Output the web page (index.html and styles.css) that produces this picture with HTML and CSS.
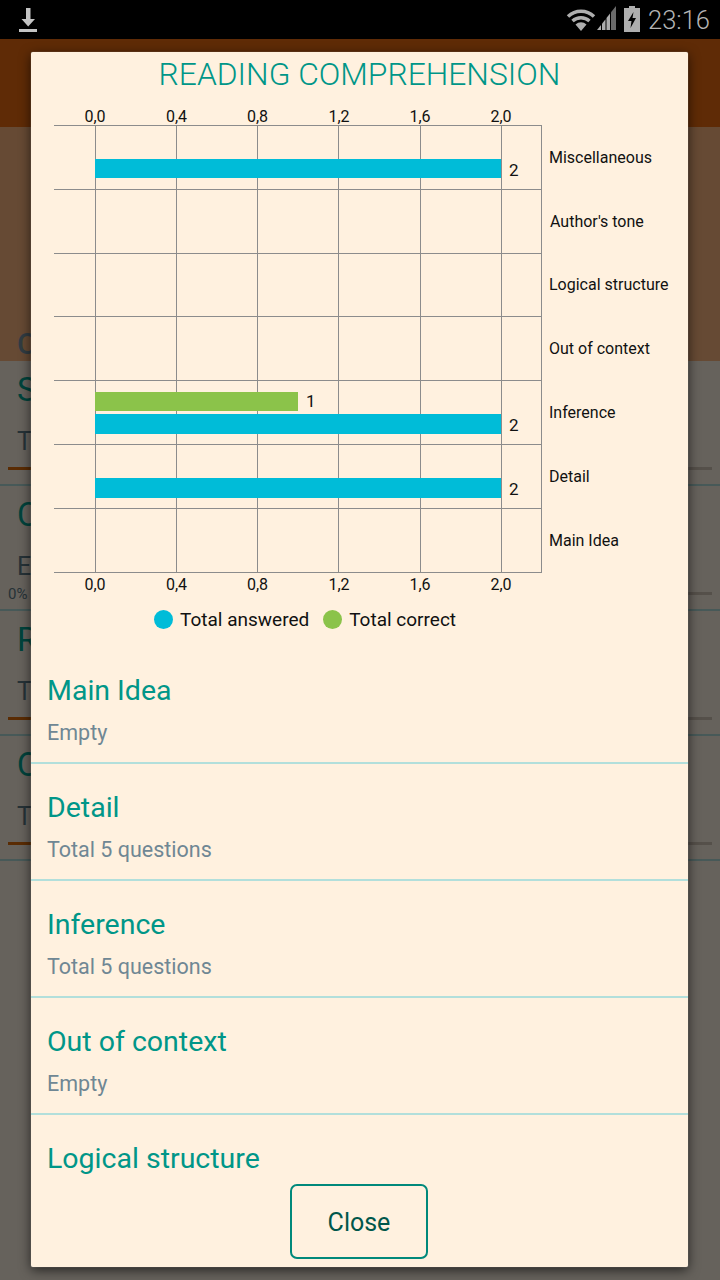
FILE: index.html
```html
<!DOCTYPE html>
<html lang="en">
<head>
  <meta charset="UTF-8" />
  <meta name="viewport" content="width=device-width, initial-scale=1" />
  <title>Reading Comprehension</title>
  <link rel="stylesheet" href="styles.css">
</head>
<body>
  <div class="status-bar">
    <svg class="status-download" width="18" height="25" viewBox="0 0 18 25" aria-hidden="true">
      <path d="M7 0h4.500v11H16l-6.800 7.500L2.500 11H7z" />
      <rect x="0" y="21" width="18" height="3" />
    </svg>
    <div class="status-right">
      <svg class="status-icon" width="30" height="24" viewBox="0 0 30 24" aria-hidden="true">
        <path class="wifi-arc" d="M2 8.500a19 19 0 0 1 26 0" />
        <path class="wifi-arc" d="M6.500 13a13 13 0 0 1 17 0" />
        <path d="M9.500 16.500a8 8 0 0 1 11 0L15 23z" />
      </svg>
      <svg class="status-icon signal" width="20" height="25" viewBox="0 0 20 25" aria-hidden="true">
        <path d="M0 25l4-5v5z" />
        <path d="M5 25v-6.200l3.500-4.500V25z" />
        <path d="M9.500 25V13l3.500-4.500V25z" />
        <path class="dim" d="M14 25V7.300L19 1v24z" />
      </svg>
      <svg class="status-icon battery" width="16" height="26" viewBox="0 0 16 26" aria-hidden="true">
        <path d="M5 0h6v2h5v24H0V2h5zM9.500 6L4 15h3.500l-1 7L12 12H8.500z" fill-rule="evenodd" />
      </svg>
      <span class="status-time">23:16</span>
    </div>
  </div>

  <div class="app">
    <div class="app-bar"></div>
    <div class="banner">
      <span class="banner-title">Categories</span>
    </div>
    <div class="category">
      <div class="category-title">Sentence completion</div>
      <div class="category-sub">Total 10 questions</div>
      <div class="progress"><div class="progress-fill"></div></div>
    </div>
    <div class="category">
      <div class="category-title">Critical reasoning</div>
      <div class="category-sub">Empty</div>
      <div class="progress progress-empty"><span class="progress-label">0%</span><div class="progress-track"></div></div>
    </div>
    <div class="category">
      <div class="category-title">Reading comprehension</div>
      <div class="category-sub">Total 25 questions</div>
      <div class="progress"><div class="progress-fill"></div></div>
    </div>
    <div class="category">
      <div class="category-title">Quantitative</div>
      <div class="category-sub">Total 12 questions</div>
      <div class="progress"><div class="progress-fill"></div></div>
    </div>

    <div class="overlay"></div>

    <div class="modal">
      <h1 class="modal-title">READING COMPREHENSION</h1>

      <!-- viewBox uses screen coordinates so the numbers read like the grid -->
      <svg class="chart" width="657" height="496" viewBox="31 104 657 496">
        <g class="grid">
          <path d="M54 125.500H541.500M54 189.500H541.500M54 253.500H541.500M54 316.500H541.500M54 380.500H541.500M54 444.500H541.500M54 508.500H541.500M54 572.500H541.500" />
          <path d="M95.500 125V573M176.500 125V573M257.500 125V573M338.500 125V573M420.500 125V573M501.500 125V573M541.500 125V573" />
        </g>
        <rect class="bar-answered" x="95" y="159" width="406" height="19" />
        <rect class="bar-correct" x="95" y="392" width="203" height="19" />
        <rect class="bar-answered" x="95" y="414" width="406" height="20" />
        <rect class="bar-answered" x="95" y="478" width="406" height="20" />

        <g class="axis">
          <text x="95" y="122">0,0</text>
          <text x="176.500" y="122">0,4</text>
          <text x="257.500" y="122">0,8</text>
          <text x="339" y="122">1,2</text>
          <text x="420" y="122">1,6</text>
          <text x="501" y="122">2,0</text>
        </g>
        <g class="axis">
          <text x="95" y="590">0,0</text>
          <text x="176.500" y="590">0,4</text>
          <text x="257.500" y="590">0,8</text>
          <text x="339" y="590">1,2</text>
          <text x="420" y="590">1,6</text>
          <text x="501" y="590">2,0</text>
        </g>
        <g class="value">
          <text x="509" y="176">2</text>
          <text x="306" y="407">1</text>
          <text x="509" y="431">2</text>
          <text x="509" y="495">2</text>
        </g>
        <g class="label">
          <text x="549" y="163">Miscellaneous</text>
          <text x="550" y="227">Author's tone</text>
          <text x="549" y="290">Logical structure</text>
          <text x="549" y="354">Out of context</text>
          <text x="549" y="418">Inference</text>
          <text x="549" y="482">Detail</text>
          <text x="549" y="546">Main Idea</text>
        </g>
      </svg>

      <div class="legend">
        <span class="legend-item"><i class="dot dot-answered"></i>Total answered</span>
        <span class="legend-item"><i class="dot dot-correct"></i>Total correct</span>
      </div>

      <div class="topic-list">
        <div class="topic">
          <div class="topic-name">Main Idea</div>
          <div class="topic-count">Empty</div>
        </div>
        <div class="topic">
          <div class="topic-name">Detail</div>
          <div class="topic-count">Total 5 questions</div>
        </div>
        <div class="topic">
          <div class="topic-name">Inference</div>
          <div class="topic-count">Total 5 questions</div>
        </div>
        <div class="topic">
          <div class="topic-name">Out of context</div>
          <div class="topic-count">Empty</div>
        </div>
        <div class="topic">
          <div class="topic-name">Logical structure</div>
        </div>
      </div>

      <div class="modal-footer">
        <button class="close-btn" type="button">Close</button>
      </div>
    </div>
  </div>
</body>
</html>
```

FILE: styles.css
```css
body {
  margin: 0;
  background: #000;
  font-family: Roboto, "Noto Sans", sans-serif;
}

/* status bar */
.status-bar {
  height: 39px;
  background: #000;
  display: flex;
  align-items: center;
  justify-content: space-between;
  padding: 0 10px 0 19px;
}
.status-download {
  fill: #c4c4c4;
  margin-top: 1px;
}
.status-right {
  display: flex;
  align-items: center;
}
.status-icon {
  fill: #aeaeae;
  display: block;
}
.wifi-arc {
  fill: none;
  stroke: #aeaeae;
  stroke-width: 3.5;
}
.signal {
  margin-left: 1px;
  margin-bottom: 4px;
}
.signal .dim {
  fill: #6a6a6a;
}
.battery {
  margin-left: 7px;
  margin-bottom: 1px;
}
.status-time {
  margin-left: 8px;
  font-size: 25.500px;
  font-weight: 300;
  color: #b4b4b4;
}

/* page behind the dialog */
.app {
  position: relative;
  height: 1241px;
  overflow: hidden;
  background: #fff5e5;
}
.app-bar {
  height: 88px;
  background: #ee6c0f;
}
.banner {
  height: 234px;
  background: #ffb982;
  display: flex;
  align-items: flex-end;
  box-sizing: border-box;
  padding: 0 17px 0;
}
.banner-title {
  font-size: 30px;
  font-weight: 500;
  color: #7b97a5;
}
.category {
  height: 125px;
  box-sizing: border-box;
  padding: 9px 8px 0;
  border-bottom: 2px solid #b2dfdb;
}
.category-title {
  padding-left: 9px;
  font-size: 33px;
  line-height: 40px;
  color: #00a896;
}
.category-sub {
  padding-left: 9px;
  margin-top: 17px;
  font-size: 25px;
  line-height: 30px;
  color: #607d8b;
}
.progress {
  height: 3px;
  margin: 10px 0 0;
  width: 704px;
  background: #d5c8b8;
}
.progress-fill {
  width: 45%;
  height: 100%;
  background: #e06f0a;
}
.progress-empty {
  background: none;
  display: flex;
  align-items: center;
  gap: 8px;
}
.progress-label {
  font-size: 15px;
  color: #607d8b;
}
.progress-track {
  flex: 1;
  height: 3px;
  background: #d5c8b8;
}
.overlay {
  position: absolute;
  inset: 0;
  background: rgba(0, 0, 0, 0.6);
}

/* dialog */
.modal {
  position: absolute;
  top: 13px;
  left: 31px;
  width: 657px;
  height: 1215px;
  display: flex;
  flex-direction: column;
  background: #fff1df;
  border-radius: 2px;
  box-shadow: 0 0 1px #aaa, 0 3px 12px rgba(0, 0, 0, 0.65);
}
.modal-title {
  margin: 0;
  height: 52px;
  font-size: 31.800px;
  line-height: 44px;
  font-weight: 300;
  text-align: center;
  color: #009688;
}
.chart {
  display: block;
  flex: none;
}
.grid path {
  fill: none;
  stroke: #8c8c8c;
  stroke-width: 1;
}
.bar-answered {
  fill: #00bcd8;
}
.bar-correct {
  fill: #8bc34a;
}
.chart text {
  font-family: Roboto, sans-serif;
  fill: #111;
}
.axis text {
  font-size: 16px;
  text-anchor: middle;
}
.value text {
  font-size: 17px;
}
.label text {
  font-size: 16px;
}
.legend {
  height: 47px;
  display: flex;
  gap: 14px;
  padding: 4px 0 0 123px;
  box-sizing: border-box;
  font-size: 19px;
  color: #111;
}
.legend-item {
  display: flex;
  align-items: center;
  height: 30px;
  gap: 7px;
}
.dot {
  width: 19px;
  height: 19px;
  border-radius: 50%;
}
.dot-answered {
  background: #00bcd8;
}
.dot-correct {
  background: #8bc34a;
}
.topic-list {
  flex: 1;
  min-height: 0;
  overflow: hidden;
}
.topic {
  height: 117px;
  box-sizing: border-box;
  padding: 25px 17px 0 16px;
  border-bottom: 2px solid #b2dfdb;
}
.topic-name {
  font-size: 28.500px;
  line-height: 38px;
  color: #009688;
}
.topic-count {
  margin-top: 8px;
  font-size: 21.500px;
  line-height: 30px;
  color: #6f8794;
}
.modal-footer {
  flex: none;
  display: flex;
  justify-content: center;
  padding: 10px 1px 8px 0;
}
.close-btn {
  width: 138px;
  height: 75px;
  padding: 2px 0 0;
  background: transparent;
  border: 2px solid #00897b;
  border-radius: 7px;
  font-family: inherit;
  font-size: 25px;
  color: #00574b;
}
```
